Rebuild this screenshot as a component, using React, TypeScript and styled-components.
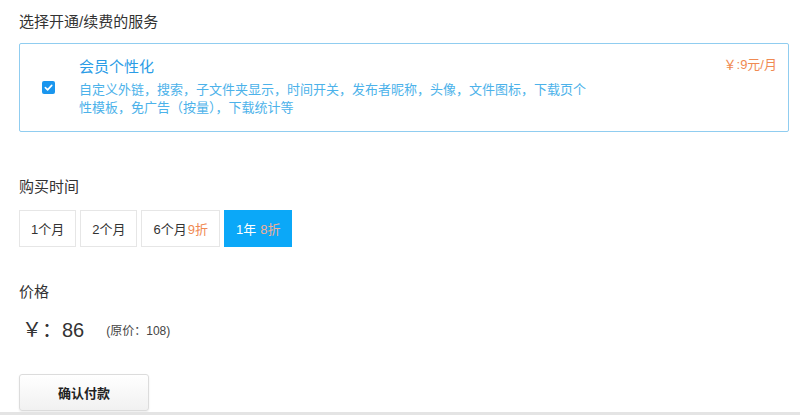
import React from 'react';
import styled, {createGlobalStyle} from 'styled-components';

const GlobalStyle = createGlobalStyle`
  body {
    margin: 0;
    background: white;
    font-family: "Liberation Sans", "Noto Sans CJK SC", sans-serif;
    color: #333;
  }
`;

const Page = styled.div`
  width: 800px;
  height: 415px;
  overflow: hidden;
  display: flex;
  flex-direction: column;
`;

const Content = styled.div`
  padding: 12px 11px 0 19px;
`;

const Label = styled.div<{$gap: number}>`
  font-size: 15px;
  line-height: 20px;
  color: #333;
  margin-top: ${p => p.$gap}px;
`;

const ServiceBox = styled.div`
  margin-top: 11px;
  border: 1px solid #90cdf0;
  border-radius: 2px;
  padding: 13px 11px 14px 22px;
  display: flex;
  align-items: center;
`;

const Check = styled.span`
  width: 13px;
  height: 13px;
  border-radius: 2px;
  background: #1a96ee;
  display: flex;
  align-items: center;
  justify-content: center;
  flex-shrink: 0;
`;

const Info = styled.div`
  margin-left: 24px;
  flex: 1;
`;

const Name = styled.div`
  font-size: 15px;
  line-height: 20px;
  color: #2a9ce6;
`;

const Desc = styled.div`
  margin-top: 4px;
  font-size: 13px;
  line-height: 18px;
  color: #4cb2ea;
  max-width: 514px;
`;

const Price = styled.div`
  align-self: flex-start;
  margin-top: -2px;
  font-size: 13px;
  line-height: 20px;
  color: #f08a52;
`;

const Options = styled.div`
  margin-top: 13px;
  display: flex;
  gap: 4px;
`;

const Option = styled.div<{$active?: boolean}>`
  height: 37px;
  box-sizing: border-box;
  padding: 0 11px;
  display: flex;
  align-items: center;
  font-size: 13px;
  border: 1px solid ${p => (p.$active ? '#0ba8f8' : '#e6e6e6')};
  background: ${p => (p.$active ? '#0ba8f8' : 'white')};
  color: ${p => (p.$active ? 'white' : '#333')};
`;

const Discount = styled.span<{$active?: boolean}>`
  margin-left: ${p => (p.$active ? 4 : 1)}px;
  color: ${p => (p.$active ? '#f4ae94' : '#f08a52')};
`;

const PriceLine = styled.div`
  margin-top: 11px;
  height: 30px;
  display: flex;
  align-items: center;
  padding-left: 3px;
`;

const Amount = styled.span`
  font-size: 20px;
  color: #333;
`;

const Original = styled.span`
  margin-left: 22px;
  font-size: 12px;
  color: #444;
  margin-top: 3px;
`;

const PayButton = styled.button`
  margin-top: 31px;
  width: 130px;
  height: 37px;
  border: 1px solid #dcdcdc;
  border-radius: 3px;
  background: linear-gradient(#ffffff, #f1f1f1);
  box-shadow: 0 1px 2px rgba(0, 0, 0, 0.08);
  font-family: "Liberation Sans", "Noto Sans CJK SC", sans-serif;
  font-size: 13px;
  font-weight: bold;
  color: #222;
`;

const Footer = styled.div`
  margin-top: 1px;
  height: 3px;
  background: #e4e4e4;
`;

const options = [
  {label: '1个月'},
  {label: '2个月'},
  {label: '6个月', discount: '9折'},
  {label: '1年', discount: '8折', active: true},
];

export default function App() {
  return (
    <Page>
      <GlobalStyle />
      <Content>
        <Label $gap={0}>选择开通/续费的服务</Label>
        <ServiceBox>
          <Check>
            <svg width="9" height="9" viewBox="0 0 10 10">
              <path d="M1.5 5.2 L4 7.6 L8.6 2.6" fill="none" stroke="white" strokeWidth="1.8" strokeLinecap="round" strokeLinejoin="round" />
            </svg>
          </Check>
          <Info>
            <Name>会员个性化</Name>
            <Desc>自定义外链，搜索，子文件夹显示，时间开关，发布者昵称，头像，文件图标，下载页个性模板，免广告（按量），下载统计等</Desc>
          </Info>
          <Price>￥:9元/月</Price>
        </ServiceBox>

        <Label $gap={45}>购买时间</Label>
        <Options>
          {options.map(o => (
            <Option key={o.label} $active={o.active}>
              {o.label}
              {o.discount && <Discount $active={o.active}>{o.discount}</Discount>}
            </Option>
          ))}
        </Options>

        <Label $gap={35}>价格</Label>
        <PriceLine>
          <Amount>￥：86</Amount>
          <Original>(原价：108)</Original>
        </PriceLine>

        <PayButton>确认付款</PayButton>
      </Content>
      <Footer />
    </Page>
  );
}
